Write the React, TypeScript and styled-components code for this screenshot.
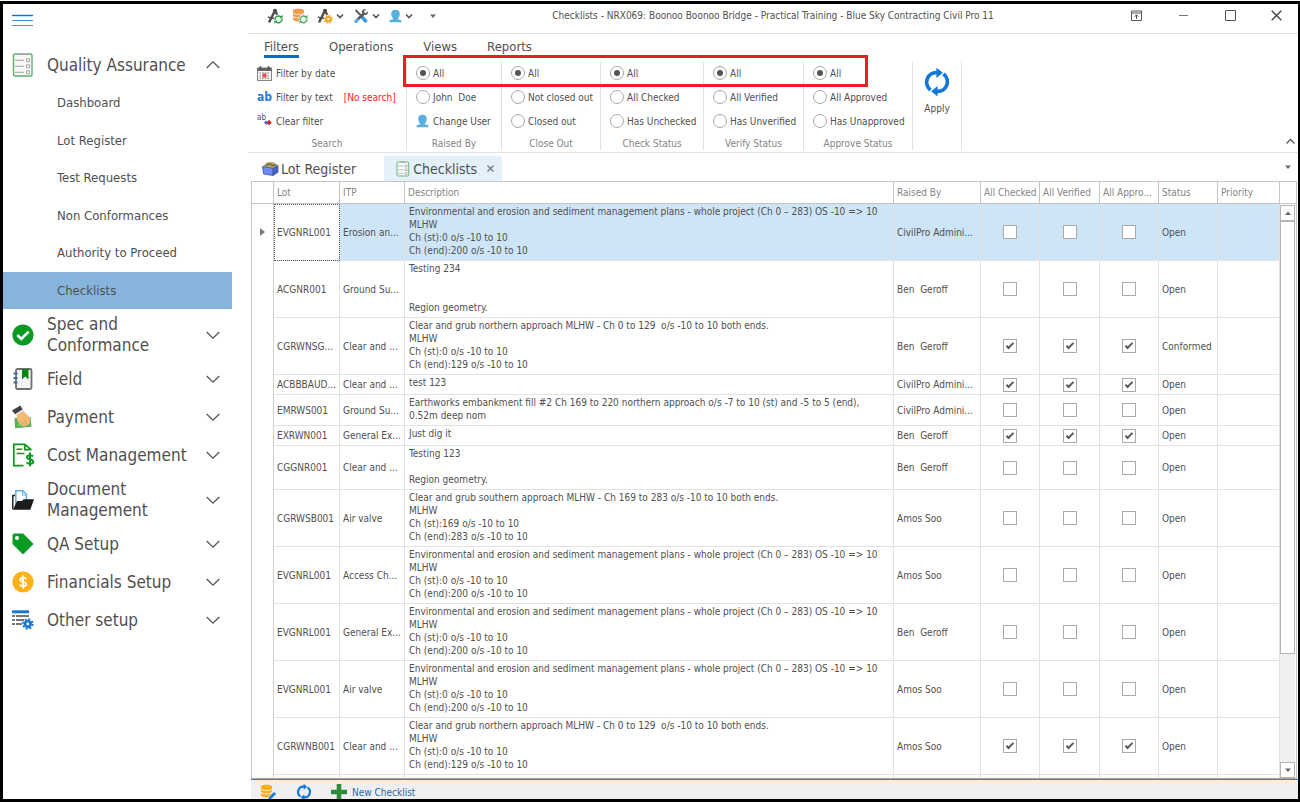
import React from "react";
import styled, { createGlobalStyle, css } from "styled-components";

const c = {
  text: "#505050",
  muted: "#858585",
  line: "#e2e2e2",
  headLine: "#c4c4c4",
  blue: "#0f6cbd",
  accent: "#1177d7",
  nav: "#86b4dd",
  row: "#cde5f7",
  green: "#0a9a22",
  red: "#ee1c24",
};

const GlobalStyle = createGlobalStyle`
  *, *::before, *::after { box-sizing: border-box; }
  body {
    margin: 0;
    background: #fff;
    color: ${c.text};
    font-family: "DejaVu Sans Condensed", "Noto Sans", "Open Sans", sans-serif;
    font-size: 10px;
  }
  button, input { font: inherit; color: inherit; }
  button { margin: 0; padding: 0; border: 0; background: none; cursor: pointer; text-align: left; }
`;

const Frame = styled.div`
  display: flex;
  height: calc(100vh - 1px);
  margin-top: 1px;
  border: 3px solid #000;
  border-right-width: 2px;
  background: #fff;
  overflow: hidden;
`;

/* ---------- side navigation ---------- */

const Sidebar = styled.nav`
  flex: none;
  width: 245px;
  padding-right: 16px;
`;

const MenuButton = styled.button`
  display: flex;
  align-items: center;
  height: 42px;
  padding: 0 9px 8px;
`;

const NavHead = styled.button<{ $tall?: boolean }>`
  display: grid;
  grid-template-columns: 22px 1fr 16px;
  column-gap: 13px;
  align-items: center;
  width: 100%;
  height: ${(p) => (p.$tall ? 51 : 38)}px;
  padding: 0 10px 0 9px;
  font-size: 17px;
  line-height: 21px;
`;

const NavLabel = styled.span<{ $wide?: boolean }>`
  max-width: ${(p) => (p.$wide ? "none" : "120px")};
  white-space: ${(p) => (p.$wide ? "nowrap" : "normal")};
`;

const SubList = styled.ul`
  display: grid;
  grid-auto-rows: 1fr;
  height: 225px;
  margin: 0;
  padding: 0;
  list-style: none;
`;

const SubLink = styled.a<{ $active?: boolean }>`
  display: flex;
  align-items: center;
  height: 100%;
  padding-left: 54px;
  font-size: 13px;
  color: ${c.text};
  text-decoration: none;
  background: ${(p) => (p.$active ? c.nav : "transparent")};
`;

/* ---------- main window ---------- */

const Main = styled.main`
  display: flex;
  flex: 1;
  flex-direction: column;
  min-width: 0;
`;

const TitleBar = styled.header`
  display: grid;
  flex: none;
  grid-template-columns: 1fr auto 1fr;
  align-items: center;
  height: 30px;
  padding-bottom: 6px;
  border-bottom: 1px solid ${c.line};
`;

const QuickTools = styled.div`
  display: flex;
  align-items: center;
  gap: 9px;
  padding-left: 19px;
`;

const ToolButton = styled.button<{ $apart?: boolean }>`
  display: flex;
  align-items: center;
  gap: 3px;
  margin-left: ${(p) => (p.$apart ? 8 : 0)}px;
`;

const Title = styled.h1`
  margin: 0;
  font-size: 10px;
  font-weight: 400;
  white-space: nowrap;
`;

const WindowButtons = styled.div`
  display: flex;
  justify-content: flex-end;
`;

const WindowButton = styled.button`
  display: flex;
  align-items: center;
  justify-content: center;
  width: 47px;
  height: 22px;

  &:last-child { width: 44px; }
`;

const Ribbon = styled.section`
  position: relative;
  flex: none;
  border-bottom: 1px solid ${c.line};
`;

const RibbonTabs = styled.div`
  display: flex;
  gap: 30px;
  height: 27px;
  padding: 4px 0 0 16px;
`;

const RibbonTab = styled.button<{ $active?: boolean }>`
  height: 20px;
  font-size: 13px;
  line-height: 18px;
  border-bottom: 3px solid ${(p) => (p.$active ? c.blue : "transparent")};
`;

const Groups = styled.div`
  display: flex;
  height: 91px;
`;

const Group = styled.fieldset<{ $width: number }>`
  display: flex;
  flex: none;
  flex-direction: column;
  width: ${(p) => p.$width}px;
  height: 89px;
  min-width: 0;
  margin: 0;
  padding: 0 0 0 9px;
  border: 0;
  border-right: 1px solid ${c.line};
`;

const Choice = styled.label`
  display: flex;
  flex: none;
  align-items: center;
  gap: 3px;
  height: 24px;
  white-space: nowrap;
`;

const Command = styled.button`
  display: flex;
  flex: none;
  align-items: center;
  gap: 4px;
  height: 24px;
  white-space: nowrap;
`;

const NoSearch = styled.span`
  padding-left: 7px;
  color: #ff1a1a;
`;

const Caption = styled.span`
  padding: 5px 9px 0 0;
  line-height: 12px;
  color: ${c.muted};
  text-align: center;
`;

const ApplyButton = styled.button`
  display: flex;
  flex-direction: column;
  align-items: center;
  gap: 7px;
  width: 49px;
  height: 89px;
  padding-top: 7px;
  border-right: 1px solid ${c.line};
`;

const Radio = styled.input`
  display: grid;
  place-items: center;
  width: 14px;
  height: 14px;
  margin: 0;
  appearance: none;
  border: 1px solid #a8a8a8;
  border-radius: 50%;
  background: #fff;

  &:checked::after {
    content: "";
    width: 6px;
    height: 6px;
    border-radius: 50%;
    background: #555;
  }
`;

const Highlight = styled.div`
  position: absolute;
  top: 21px;
  left: 155px;
  width: 465px;
  height: 32px;
  border: 3px solid ${c.red};
  pointer-events: none;
`;

const CollapseButton = styled.button`
  display: flex;
  align-items: flex-end;
  margin-left: auto;
  padding: 0 3px 6px 0;
`;

const DocTabs = styled.div`
  display: flex;
  flex: none;
  align-items: flex-end;
  height: 28px;
`;

const DocTab = styled.div<{ $active?: boolean }>`
  display: flex;
  align-items: center;
  height: 25px;
  padding: ${(p) => (p.$active ? "0 8px 0 12px" : "0 28px 0 14px")};
  font-size: 14px;
  white-space: nowrap;
  background: ${(p) => (p.$active ? "#e4f1fa" : "transparent")};
`;

const DocTabButton = styled.button<{ $gap: number }>`
  display: flex;
  align-items: center;
  gap: ${(p) => p.$gap}px;
`;

const CloseTab = styled.button`
  margin-left: 10px;
  display: flex;
`;

const TabMenu = styled.button`
  display: flex;
  align-self: center;
  margin-left: auto;
  padding-right: 7px;
`;

/* ---------- data grid ---------- */

const GridPane = styled.div`
  display: flex;
  flex: 1;
  min-height: 0;
  margin: 0 1px 0 3px;
  border: 1px solid ${c.headLine};
  border-bottom-color: #a9a9a9;
`;

const TableClip = styled.div`
  flex: 1;
  min-width: 0;
  overflow: hidden;
`;

const Table = styled.table`
  width: 100%;
  table-layout: fixed;
  border-collapse: separate;
  border-spacing: 0;
`;

const Th = styled.th`
  height: 22px;
  padding: 0 0 0 3px;
  font-weight: 400;
  text-align: left;
  color: ${c.muted};
  white-space: nowrap;
  overflow: hidden;
  text-overflow: ellipsis;
  border-right: 1px solid ${c.headLine};
  border-bottom: 1px solid ${c.headLine};
`;

const Td = styled.td<{ $focus?: boolean }>`
  padding: 0 0 0 3px;
  white-space: nowrap;
  overflow: hidden;
  text-overflow: ellipsis;
  border-right: 1px solid ${c.line};
  border-bottom: 1px solid ${c.line};
  ${(p) =>
    p.$focus &&
    css`
      background: #fff;
      outline: 1px dotted #555;
      outline-offset: -1px;
    `}
`;

const IndicatorCell = styled.td`
  padding: 0 0 0 8px;
  background: #fff;
  border-right: 1px solid #d0d0d0;
`;

const DescriptionCell = styled(Td)`
  padding: 1px 0 3px 4px;
  line-height: 13px;
  vertical-align: top;
  white-space: pre-wrap;
`;

const CheckCell = styled(Td)`
  padding: 0;
`;

const Row = styled.tr<{ $selected?: boolean }>`
  height: 20px;
  background: ${(p) => (p.$selected ? c.row : "#fff")};
`;

const Checkbox = styled.input`
  display: grid;
  place-items: center;
  width: 14px;
  height: 14px;
  margin: 0 auto;
  appearance: none;
  border: 1px solid #ababab;
  background: #fff;

  &:checked::after {
    content: "";
    width: 8px;
    height: 4px;
    margin-bottom: 2px;
    border: solid #5a5a5a;
    border-width: 0 0 2px 2px;
    transform: rotate(-45deg);
  }
`;

const ScrollColumn = styled.div`
  display: flex;
  flex: none;
  flex-direction: column;
  width: 16px;
`;

const ScrollHead = styled.div`
  height: 22px;
  border-bottom: 1px solid ${c.headLine};
`;

const ScrollBar = styled.div`
  display: flex;
  flex: 1;
  flex-direction: column;
  min-height: 0;
  width: 15px;
  margin-top: 1px;
  background: #efefef;
`;

const ScrollArrow = styled.button`
  display: flex;
  align-items: center;
  justify-content: center;
  height: 16px;
  border: 1px solid #b4b4b4;
  background: #fff;
`;

const ScrollTrack = styled.div`
  flex: 1;
`;

const ScrollThumb = styled.div`
  height: 80%;
  border: 1px solid #b4b4b4;
  background: #fff;
`;

const Footer = styled.footer`
  display: flex;
  flex: none;
  align-items: flex-start;
  height: 20px;
  margin: 0 0 0 3px;
  padding: 4px 0 0 9px;
  border-top: 1px solid #3c7fb5;
  background: #efefef;
  overflow: hidden;
`;

const FooterButton = styled.button<{ $after?: number }>`
  display: flex;
  align-items: center;
  gap: 5px;
  height: 16px;
  margin-right: ${(p) => p.$after ?? 0}px;
  color: #1f69a8;
  white-space: nowrap;
`;

/* ---------- icons ---------- */

const Chevron = ({ up, size = 14, color = "#555" }: { up?: boolean; size?: number; color?: string }) => (
  <svg width={size} height={size} viewBox="0 0 14 14" fill="none" stroke={color} strokeWidth={size < 12 ? 2 : 1.3}>
    <path d={up ? "M.7 10 7 3.8l6.3 6.2" : "M.7 4 7 10.2 13.3 4"} />
  </svg>
);

const SmallChevron = () => (
  <svg width="8" height="8" viewBox="0 0 8 8" fill="none" stroke="#555" strokeWidth="1.6">
    <path d="M1 2.5 4 5.5l3-3" />
  </svg>
);

const Triangle = ({ up }: { up?: boolean }) => (
  <svg width="6" height="6" viewBox="0 0 6 6" fill="#666">
    <path d={up ? "M0 5 3 1.5 6 5z" : "M0 1.5h6L3 5z"} />
  </svg>
);

const MenuIcon = () => (
  <svg width="21" height="14" viewBox="0 0 21 14">
    <path d="M0 1.5h21" stroke="#1470c4" strokeWidth="1.4" />
    <path d="M0 6.5h21M0 11.5h21" stroke="#4592da" strokeWidth="1" />
  </svg>
);

const ChecklistIcon = ({ width = 22, height = 24 }: { width?: number; height?: number }) => (
  <svg width={width} height={height} viewBox="0 0 22 24" fill="none">
    <rect x="1.5" y="1" width="18.5" height="22" rx="1.5" fill="#f7f7f7" stroke="#5fae70" strokeWidth="1.4" />
    <path d="M6 1h9" stroke="#aaa" strokeWidth="2" />
    <path d="M3 7.3h9M3 13.3h9M3 19.3h9" stroke="#b5b5b5" strokeWidth="1.3" />
    <path d="M14.5 5.8h3v3h-3zM14.5 11.8h3v3h-3zM14.5 17.8h3v3h-3z" stroke="#a5a5a5" />
  </svg>
);

const OkIcon = () => (
  <svg width="22" height="22" viewBox="0 0 22 22">
    <circle cx="11" cy="11" r="10.6" fill={c.green} />
    <path d="m5.3 11 4 4 7.4-7.4" fill="none" stroke="#fff" strokeWidth="2.6" />
  </svg>
);

const FieldIcon = () => (
  <svg width="22" height="22" viewBox="0 0 22 22" fill="none">
    <rect x="4" y="1" width="15.5" height="20" rx="1.5" fill="#f4f4f4" stroke="#6f6f6f" strokeWidth="1.8" />
    <path d="M1.5 5.5h4M1.5 10h4M1.5 14.5h4" stroke="#3b6f9d" strokeWidth="1.8" />
    <path d="M10 1h6.5v10.5l-3.2-3-3.3 3z" fill="#07860f" />
  </svg>
);

const PaymentIcon = () => (
  <svg width="22" height="24" viewBox="0 0 22 24">
    <path d="m2.5 13 16-1 1 9.7-16.4 1.6z" fill="#5bb254" />
    <path d="m6 16 10-1 .6 5-10 1z" fill="#7fcf75" />
    <path d="m4.5 8 6-3 6.2 6.2c1.7 2 1.800 5 .8 7.5-1.5 1.5-5 3-6.5 2.6L5.3 16z" fill="#f7b978" />
    <path d="m9 16 3.500 4M11.500 14.500l3.400 4.500" stroke="#dd9852" strokeWidth=".8" />
    <path d="M0 5.600 8.300.4l2.500 4.300-7.600 4.900z" fill="#3c4047" />
    <path d="m3 9.300 7.400-4.800.8 1.500L4 10.600z" fill="#e9e9e9" />
  </svg>
);

const CostIcon = () => (
  <svg width="23" height="24" viewBox="0 0 23 24" fill="none" stroke={c.green}>
    <path d="M11.5 22.7H1.800V1.300h11l6 5v1.200M12.800 1.300v5.400h6" strokeWidth="1.7" />
    <path d="M4.500 6.300h5.800M4.500 10.600h8" strokeWidth="1.5" />
    <path d="M21 13.400c-.9-1.600-6-1.700-6 .9 0 2.800 6.200 1.400 6.200 4.400 0 2.700-5.600 2.600-6.500.7M18 9.600v13.600" strokeWidth="2" />
  </svg>
);

const FolderIcon = () => (
  <svg width="22" height="22" viewBox="0 0 22 22">
    <path d="M3.800 16V1.700h7l3.600 3.600V13" fill="#fff" stroke="#5fb0ee" strokeWidth="1.5" />
    <path d="M10.500 2v4h4" fill="none" stroke="#5fb0ee" strokeWidth="1.2" />
    <path d="M3 6.500H.8v13.800" fill="none" stroke="#222" strokeWidth="1.5" />
    <path d="M1 20.700 5 12h5l1.600-1.700H22l-3.700 10.400z" fill="#1c1c1c" />
  </svg>
);

const TagIcon = () => (
  <svg width="22" height="22" viewBox="0 0 22 22">
    <path d="M1.800.5h9.400L21.500 11 11 21.600.5 11V2z" fill={c.green} />
    <circle cx="5" cy="5" r="2" fill="#fff" />
  </svg>
);

const CoinIcon = () => (
  <svg width="22" height="22" viewBox="0 0 22 22" fill="none">
    <circle cx="11" cy="11" r="10.6" fill="#ffb11b" />
    <path d="M14.200 8.200c-.8-2-6-2.200-6 .5 0 2.900 6.100 1.600 6.100 4.500 0 2.700-5.500 2.500-6.600.3M11 4.200v13.600" stroke="#fff" strokeWidth="1.7" />
  </svg>
);

const Gear = ({ x, y, r, color }: { x: number; y: number; r: number; color: string }) => (
  <g stroke={color} fill="none">
    <circle cx={x} cy={y} r={r * 0.5} strokeWidth={r * 0.5} />
    <circle cx={x} cy={y} r={r * 0.85} strokeWidth={r * 0.36} strokeDasharray={`${r * 0.334} ${r * 0.334}`} />
  </g>
);

const OtherIcon = () => (
  <svg width="22" height="20" viewBox="0 0 22 20">
    <path d="M0 .3h17v3H0z" fill="#1b78d0" />
    <path d="M0 5h3v2H0zm4 0h13v2H4zM0 9h3v2H0zm4 0h8v2H4zM0 13h3v2H0zm4 0h6v2H4z" fill="#777" />
    <Gear x={15.8} y={14} r={5.6} color="#1b78d0" />
  </svg>
);

const Compass = () => (
  <g fill="none" stroke="#4d4d4d">
    <path d="M7 4.5 2 14.5M9 4.5l3 6" strokeWidth="2.4" />
    <path d="M1 8.8c3.5 2.4 8 1.6 10.5-.8" strokeWidth="1.4" />
    <circle cx="8" cy="3" r="2.2" fill="#4d4d4d" stroke="none" />
  </g>
);

const MiniRefresh = ({ color }: { color: string }) => (
  <g>
    <circle cx="11.5" cy="11.3" r="4.8" fill="#fff" />
    <path d="M8 12a3.6 3.6 0 0 1 6-3M15 10.8a3.6 3.6 0 0 1-6 3" fill="none" stroke={color} strokeWidth="1.5" />
    <path d="M15.6 6.8v3.5h-3.4zM7.4 15.8v-3.4h3.4z" fill={color} />
  </g>
);

const CompassRefreshIcon = () => (
  <svg width="16" height="16" viewBox="0 0 16 16">
    <Compass />
    <MiniRefresh color="#2aa043" />
  </svg>
);

const Discs = ({ color, light }: { color: string; light: string }) => (
  <g>
    <path d="M1 2.6C1 .2 12 .2 12 2.6v9C12 14 1 14 1 11.6z" fill={color} />
    <path d="M1 5c1.5 2 9.5 2 11 0M1 8.4c1.5 2 9.5 2 11 0" fill="none" stroke={light} strokeWidth="1.1" />
  </g>
);

const DbRefreshIcon = () => (
  <svg width="16" height="16" viewBox="0 0 16 16">
    <Discs color="#f2994a" light="#fde3cb" />
    <MiniRefresh color="#4fae6a" />
  </svg>
);

const CompassGearIcon = () => (
  <svg width="16" height="16" viewBox="0 0 16 16">
    <Compass />
    <circle cx="11.3" cy="11.2" r="4.6" fill="#fff" />
    <Gear x={11.3} y={11.2} r={4.4} color="#f5a623" />
  </svg>
);

const ToolsIcon = () => (
  <svg width="16" height="16" viewBox="0 0 16 16" fill="none">
    <path d="M2.5 2 8 7.5" stroke="#555" strokeWidth="1.8" />
    <path d="m8.5 8.5 5 5.5" stroke="#3f97e0" strokeWidth="3.4" />
    <path d="M11 5.5 3 13" stroke="#555" strokeWidth="2.4" />
    <path d="M2 14.5 5.5 11" stroke="#5aa7e6" strokeWidth="3" />
    <path d="M14.8 3.3 12.5 5.4l-1.8-1.7L13 1.3c-3-.8-4.8 1.4-3.9 3.5l1.8 2c2.5.8 4.7-.8 3.9-3.5z" fill="#555" />
  </svg>
);

const UserIcon = () => (
  <svg width="13" height="14" viewBox="0 0 13 14" fill="#5aaee0">
    <path d="M6.500.8c3 0 4.400 1.600 4.300 4.200-.1 2-.8 3.300-1.700 4.200v1.400c1.700.2 3 .3 3.300 1.200v1.400H.6v-1.400c.3-.9 1.600-1 3.300-1.200V9.200C3 8.300 2.300 7 2.200 5 2.100 2.400 3.500.8 6.500.8z" />
  </svg>
);

const CalendarIcon = () => (
  <svg width="15" height="15" viewBox="0 0 15 15">
    <rect x=".6" y="2" width="13.8" height="12.4" fill="#fff" stroke="#777" />
    <path d="M.6 2h13.8v3H.6z" fill="#666" />
    <path d="M3.5.3v3M11.5.3v3" stroke="#444" strokeWidth="1.6" />
    <path d="M2.5 7h10M2.5 9.700h10M2.5 12.300h10" stroke="#999" strokeWidth="1.4" strokeDasharray="1.600 1" />
    <path d="M5.5 7.5h4v4h-4z" fill="#e25555" />
  </svg>
);

const TextGlyph = styled.span`
  width: 15px;
  font-size: 12px;
  font-weight: 700;
  color: #1f7fd6;
`;

const ClearMark = styled.span`
  position: relative;
  display: inline-block;
  width: 15px;
  height: 14px;
  font-size: 8px;
  line-height: 8px;

  svg { position: absolute; right: 0; bottom: 2px; }
`;

const EraserIcon = () => (
  <svg width="8" height="7" viewBox="0 0 8 7">
    <path d="M0 3.5 2 1.5l2.5 2.5L2.5 6z" fill="#3f6fd0" />
    <path d="M2.7 3.3 5 .8l2.8 2.7L5 6.5z" fill="#e0202c" />
  </svg>
);

const RefreshIcon = ({ size }: { size: number }) => (
  <svg width={size} height={size} viewBox="0 0 24 24" fill="none">
    <path d="M6.500 18.800A8.200 8.200 0 0 1 12 4M17.500 5.200a8.200 8.200 0 0 1-5.500 14.800" stroke={c.accent} strokeWidth="3.2" />
    <path d="M11.500 -.2 17 4l-5.500 4.600zM12.500 15.400v9L7 20z" fill={c.accent} />
  </svg>
);

const PinWindowIcon = () => (
  <svg width="11" height="11" viewBox="0 0 11 11" fill="none" stroke="#555">
    <path d="M.5 1h10v9.5H.5zM.5 3h10M5.5 9V5M3.500 6.800l2-2 2 2" />
  </svg>
);

const MinimizeIcon = () => (
  <svg width="11" height="11" viewBox="0 0 11 11" stroke="#777">
    <path d="M1 5.500h9" />
  </svg>
);

const MaximizeIcon = () => (
  <svg width="11" height="11" viewBox="0 0 11 11" fill="none" stroke="#555">
    <path d="M.5.5h10v10H.5z" />
  </svg>
);

const CloseIcon = ({ size, color }: { size: number; color: string }) => (
  <svg width={size} height={size} viewBox="0 0 11 11" stroke={color} strokeWidth={size < 10 ? 2 : 1.4}>
    <path d="m.7.7 9.6 9.6m0-9.600L.7 10.300" />
  </svg>
);

const LotBoxIcon = () => (
  <svg width="17" height="15" viewBox="0 0 17 15">
    <path d="m1 5 4-3.500L10 .8l5.500 2.700V6L11 8.500 1.500 7z" fill="#b7a26a" />
    <path d="m4 4.500 3-1.500 4 1.500 2.500-.8" stroke="#6f5f35" fill="none" strokeWidth="1.2" />
    <path d="M.5 5.500 11 7.300V14.500L1.500 13z" fill="#6f8df0" stroke="#3f56a8" strokeWidth=".8" />
    <path d="M11 7.300 16 4.500v6.800l-5 3.200z" fill="#4a62c4" stroke="#3f56a8" strokeWidth=".8" />
  </svg>
);

const DbEditIcon = () => (
  <svg width="17" height="17" viewBox="0 0 17 17">
    <Discs color="#fbae17" light="#fff1d0" />
    <path d="m8 16 .6-3 5.400-5.500 2.500 2.500-5.500 5.500z" fill="#1c7cd6" stroke="#efefef" strokeWidth=".8" />
  </svg>
);

const PlusIcon = () => (
  <svg width="16" height="16" viewBox="0 0 16 16">
    <path d="M5.7 0h4.600v5.700H16v4.600h-5.700V16H5.700v-5.700H0V5.700h5.700z" fill="#2e8b3a" />
  </svg>
);

/* ---------- data ---------- */

const subItems = ["Dashboard", "Lot Register", "Test Requests", "Non Conformances", "Authority to Proceed", "Checklists"];

const navItems = [
  { label: "Spec and Conformance", icon: <OkIcon />, tall: true },
  { label: "Field", icon: <FieldIcon /> },
  { label: "Payment", icon: <PaymentIcon /> },
  { label: "Cost Management", icon: <CostIcon /> },
  { label: "Document Management", icon: <FolderIcon />, tall: true },
  { label: "QA Setup", icon: <TagIcon /> },
  { label: "Financials Setup", icon: <CoinIcon /> },
  { label: "Other setup", icon: <OtherIcon /> },
];

const radioGroups = [
  { caption: "Raised By", width: 95, options: ["All", "John\u00a0 Doe"], changeUser: true },
  { caption: "Close Out", width: 99, options: ["All", "Not closed out", "Closed out"] },
  { caption: "Check Status", width: 103, options: ["All", "All Checked", "Has Unchecked"] },
  { caption: "Verify Status", width: 100, options: ["All", "All Verified", "Has Unverified"] },
  { caption: "Approve Status", width: 109, options: ["All", "All Approved", "Has Unapproved"] },
];

const columns = [
  { label: "", width: 22 },
  { label: "Lot", width: 66 },
  { label: "ITP", width: 65 },
  { label: "Description", width: 0 },
  { label: "Raised By", width: 87 },
  { label: "All Checked", width: 59 },
  { label: "All Verified", width: 60 },
  { label: "All Appro...", width: 59 },
  { label: "Status", width: 59 },
  { label: "Priority", width: 62 },
];

const planTitle = "Environmental and erosion and sediment management plans - whole project (Ch 0 – 283) OS -10 => 10";
const planText = `${planTitle}\nMLHW\nCh (st):0 o/s -10 to 10\nCh (end):200 o/s -10 to 10`;
const northText =
  "Clear and grub northern approach MLHW - Ch 0 to 129  o/s -10 to 10 both ends.\nMLHW\nCh (st):0 o/s -10 to 10\nCh (end):129 o/s -10 to 10";

const rows = [
  { lot: "EVGNRL001", itp: "Erosion an...", text: planText, by: "CivilPro Admini...", done: false, status: "Open" },
  { lot: "ACGNR001", itp: "Ground Su...", text: "Testing 234\n\n\nRegion geometry.", by: "Ben\u00a0 Geroff", done: false, status: "Open" },
  { lot: "CGRWNSG...", itp: "Clear and ...", text: northText, by: "Ben\u00a0 Geroff", done: true, status: "Conformed" },
  { lot: "ACBBBAUD...", itp: "Clear and ...", text: "test 123", by: "CivilPro Admini...", done: true, status: "Open" },
  {
    lot: "EMRWS001",
    itp: "Ground Su...",
    text: "Earthworks embankment fill #2 Ch 169 to 220 northern approach o/s -7 to 10 (st) and -5 to 5 (end),\n0.52m deep nom",
    by: "CivilPro Admini...",
    done: false,
    status: "Open",
  },
  { lot: "EXRWN001", itp: "General Ex...", text: "Just dig it", by: "Ben\u00a0 Geroff", done: true, status: "Open" },
  { lot: "CGGNR001", itp: "Clear and ...", text: "Testing 123\n\nRegion geometry.", by: "Ben\u00a0 Geroff", done: false, status: "Open" },
  {
    lot: "CGRWSB001",
    itp: "Air valve",
    text: "Clear and grub southern approach MLHW - Ch 169 to 283 o/s -10 to 10 both ends.\nMLHW\nCh (st):169 o/s -10 to 10\nCh (end):283 o/s -10 to 10",
    by: "Amos Soo",
    done: false,
    status: "Open",
  },
  { lot: "EVGNRL001", itp: "Access Ch...", text: planText, by: "Amos Soo", done: false, status: "Open" },
  { lot: "EVGNRL001", itp: "General Ex...", text: planText, by: "Ben\u00a0 Geroff", done: false, status: "Open" },
  { lot: "EVGNRL001", itp: "Air valve", text: planText, by: "Amos Soo", done: false, status: "Open" },
  { lot: "CGRWNB001", itp: "Clear and ...", text: northText, by: "Amos Soo", done: true, status: "Open" },
  { lot: "", itp: "", text: planTitle, by: "", done: false, status: "" },
];

export default function App() {
  return (
    <>
      <GlobalStyle />
      <Frame>
        <Sidebar>
          <MenuButton aria-label="Toggle menu">
            <MenuIcon />
          </MenuButton>
          <NavHead aria-expanded="true">
            <ChecklistIcon />
            <NavLabel $wide>Quality Assurance</NavLabel>
            <Chevron up />
          </NavHead>
          <SubList>
            {subItems.map((item) => (
              <li key={item}>
                <SubLink href="#" $active={item === "Checklists"}>
                  {item}
                </SubLink>
              </li>
            ))}
          </SubList>
          {navItems.map((item) => (
            <NavHead key={item.label} $tall={item.tall} aria-expanded="false">
              {item.icon}
              <NavLabel $wide={!item.tall}>{item.label}</NavLabel>
              <Chevron />
            </NavHead>
          ))}
        </Sidebar>

        <Main>
          <TitleBar>
            <QuickTools>
              <ToolButton aria-label="Reload project"><CompassRefreshIcon /></ToolButton>
              <ToolButton aria-label="Reload data"><DbRefreshIcon /></ToolButton>
              <ToolButton aria-label="Project settings"><CompassGearIcon /><SmallChevron /></ToolButton>
              <ToolButton aria-label="Tools"><ToolsIcon /><SmallChevron /></ToolButton>
              <ToolButton aria-label="User"><UserIcon /><SmallChevron /></ToolButton>
              <ToolButton $apart aria-label="Customise toolbar"><Triangle /></ToolButton>
            </QuickTools>
            <Title>Checklists - NRX069: Boonoo Boonoo Bridge - Practical Training - Blue Sky Contracting Civil Pro 11</Title>
            <WindowButtons>
              <WindowButton aria-label="Ribbon display"><PinWindowIcon /></WindowButton>
              <WindowButton aria-label="Minimise"><MinimizeIcon /></WindowButton>
              <WindowButton aria-label="Maximise"><MaximizeIcon /></WindowButton>
              <WindowButton aria-label="Close"><CloseIcon size={11} color="#444" /></WindowButton>
            </WindowButtons>
          </TitleBar>

          <Ribbon>
            <RibbonTabs>
              <RibbonTab $active>Filters</RibbonTab>
              <RibbonTab>Operations</RibbonTab>
              <RibbonTab>Views</RibbonTab>
              <RibbonTab>Reports</RibbonTab>
            </RibbonTabs>
            <Groups>
              <Group $width={159}>
                <Command><CalendarIcon />Filter by date</Command>
                <Command><TextGlyph>ab</TextGlyph>Filter by text <NoSearch>[No search]</NoSearch></Command>
                <Command><ClearMark>ab<EraserIcon /></ClearMark>Clear filter</Command>
                <Caption>Search</Caption>
              </Group>
              {radioGroups.map((group) => (
                <Group key={group.caption} $width={group.width}>
                  {group.options.map((option, i) => (
                    <Choice key={option}>
                      <Radio type="radio" name={group.caption} defaultChecked={i === 0} />
                      {option}
                    </Choice>
                  ))}
                  {group.changeUser && <Command><UserIcon />Change User</Command>}
                  <Caption>{group.caption}</Caption>
                </Group>
              ))}
              <ApplyButton><RefreshIcon size={28} />Apply</ApplyButton>
              <CollapseButton aria-label="Collapse ribbon"><Chevron up size={9} /></CollapseButton>
            </Groups>
            <Highlight />
          </Ribbon>

          <DocTabs>
            <DocTab>
              <DocTabButton $gap={2}><LotBoxIcon />Lot Register</DocTabButton>
            </DocTab>
            <DocTab $active>
              <DocTabButton $gap={3}><ChecklistIcon width={14} height={16} />Checklists</DocTabButton>
              <CloseTab aria-label="Close tab"><CloseIcon size={7} color="#777" /></CloseTab>
            </DocTab>
            <TabMenu aria-label="Tab list"><Triangle /></TabMenu>
          </DocTabs>

          <GridPane>
            <TableClip>
              <Table>
                <colgroup>
                  {columns.map((col, i) => (
                    <col key={i} width={col.width || undefined} />
                  ))}
                </colgroup>
                <thead>
                  <tr>
                    {columns.map((col, i) => (
                      <Th key={i}>{col.label}</Th>
                    ))}
                  </tr>
                </thead>
                <tbody>
                  {rows.map((row, i) => (
                    <Row key={i} $selected={i === 0}>
                      <IndicatorCell>
                        {i === 0 && (
                          <svg width="5" height="8" viewBox="0 0 5 8" fill="#777">
                            <path d="M0 0 5 4 0 8z" />
                          </svg>
                        )}
                      </IndicatorCell>
                      <Td $focus={i === 0}>{row.lot}</Td>
                      <Td>{row.itp}</Td>
                      <DescriptionCell>{row.text}</DescriptionCell>
                      <Td>{row.by}</Td>
                      {["Checked", "Verified", "Approved"].map((name) => (
                        <CheckCell key={name}>
                          {row.lot && (
                            <Checkbox type="checkbox" aria-label={`${row.lot} ${name}`} defaultChecked={row.done} />
                          )}
                        </CheckCell>
                      ))}
                      <Td>{row.status}</Td>
                      <Td />
                    </Row>
                  ))}
                </tbody>
              </Table>
            </TableClip>
            <ScrollColumn>
              <ScrollHead />
              <ScrollBar>
                <ScrollArrow aria-label="Scroll up"><Triangle up /></ScrollArrow>
                <ScrollTrack><ScrollThumb /></ScrollTrack>
                <ScrollArrow aria-label="Scroll down"><Triangle /></ScrollArrow>
              </ScrollBar>
            </ScrollColumn>
          </GridPane>

          <Footer>
            <FooterButton $after={19} aria-label="Edit data"><DbEditIcon /></FooterButton>
            <FooterButton $after={19} aria-label="Refresh"><RefreshIcon size={16} /></FooterButton>
            <FooterButton><PlusIcon />New Checklist</FooterButton>
          </Footer>
        </Main>
      </Frame>
    </>
  );
}
